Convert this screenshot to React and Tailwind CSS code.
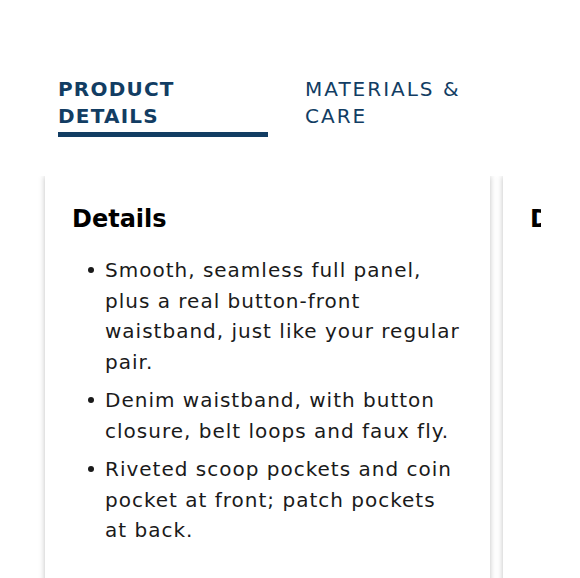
const items = [
  "Smooth, seamless full panel, plus a real button-front waistband, just like your regular pair.",
  "Denim waistband, with button closure, belt loops and faux fly.",
  "Riveted scoop pockets and coin pocket at front; patch pockets at back.",
];

const Tabs = () => (
  <div className="flex pl-[58px] pt-[76px]">
    <div className="w-[210px]">
      <div className="text-[20px] leading-[27px] font-bold tracking-[1.2px] text-[#123d63] uppercase">
        Product
        <br />
        Details
      </div>
      <div className="mt-[2px] h-[5px] bg-[#123d63]" />
    </div>
    <div className="ml-[37px] text-[20px] leading-[27px] tracking-[2px] text-[#123d63] uppercase">
      Materials &amp;
      <br />
      Care
    </div>
  </div>
);

const Card = ({ title, list }) => (
  <div className="w-[445px] shrink-0 bg-white shadow-[0_0_6px_rgba(0,0,0,0.25)] pl-[27px] pr-[28px] pt-[28px] pb-[80px]">
    <h3 className="text-[24px] leading-[30px] font-bold text-black">{title}</h3>
    <ul className="mt-[21px] space-y-[8px]">
      {list.map((t) => (
        <li key={t} className="flex text-[20px] leading-[30.5px] tracking-[1px] text-[#1a1a1a]">
          <span className="w-[33px] shrink-0 pl-[16px] pt-[12px]">
            <span className="block w-[6px] h-[6px] rounded-full bg-[#1a1a1a]" />
          </span>
          <span>{t}</span>
        </li>
      ))}
    </ul>
  </div>
);

export default function App() {
  return (
    <div className="w-[580px] h-[578px] overflow-hidden bg-white font-['DejaVu_Sans',sans-serif]">
      <Tabs />
      <div className="w-[541px] overflow-hidden mt-[39px]">
        <div className="flex gap-[13px] pl-[45px]">
          <Card title="Details" list={items} />
          <Card title="Dimensions" list={[]} />
        </div>
      </div>
    </div>
  );
}
